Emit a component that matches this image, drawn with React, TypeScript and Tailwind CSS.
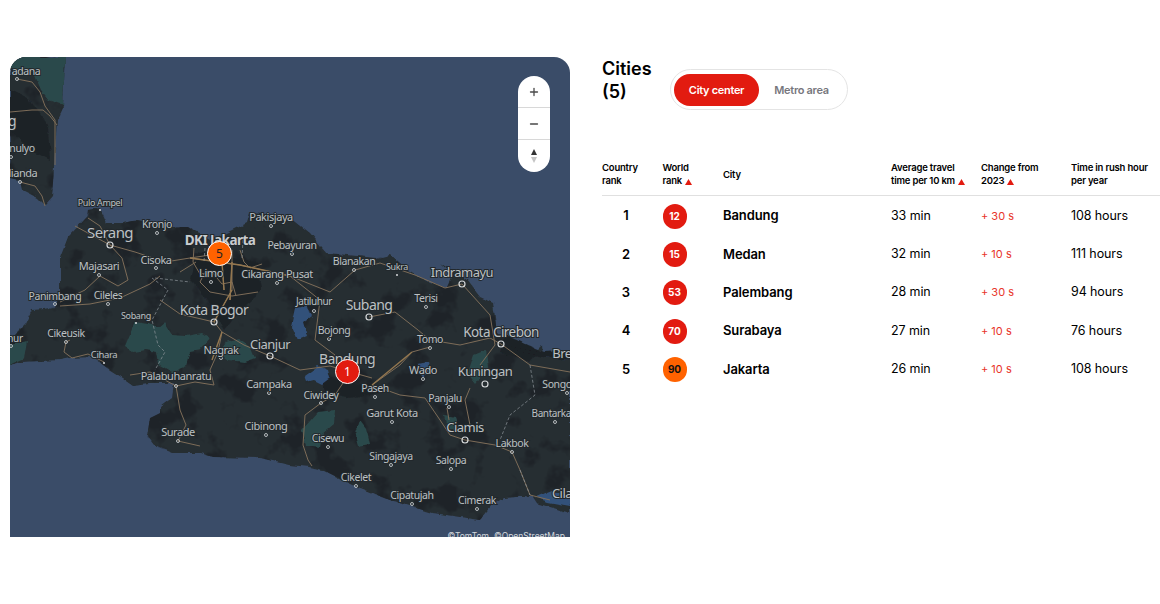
import { Minus, Plus } from 'lucide-react';

const ui = 'font-["Inter","Liberation_Sans",sans-serif]';

// label: text, x, y (baseline centre), font size; dot: 's' small, 'r' big ring
type Place = [string, number, number, number, ('s' | 'r' | 'p')?, number?, number?];

const places: Place[] = [
  ['adana', 26, 75, 10.5, 's', 17, 79],
  ['g', 12, 126, 14],
  ['nulyo', 22, 152, 10.5, 's', 11, 157],
  ['alianda', 20, 177, 11, 's', 20, 182],
  ['Pulo Ampel', 100, 206, 9, 'p', 100, 210],
  ['Kronjo', 157, 228, 10.5, 's', 157, 233],
  ['Pakisjaya', 271, 221, 11, 's', 271, 226],
  ['Serang', 110, 238, 15, 'r', 110, 245],
  ['Pebayuran', 292, 249, 10.5, 's', 292, 254],
  ['Cisoka', 156, 264, 11, 's', 156, 268],
  ['Majasari', 99, 270, 11, 's', 99, 275],
  ['Blanakan', 354, 265, 10.5, 's', 354, 270],
  ['Sukra', 397, 270, 9, 'p', 397, 275],
  ['Limo', 211, 277, 11, 's', 211, 282],
  ['Cikarang Pusat', 277, 278, 11, 's', 277, 283],
  ['Indramayu', 462, 277, 13, 'r', 462, 284],
  ['Panimbang', 55, 300, 10.5, 's', 55, 304],
  ['Cileles', 108, 299, 10.5, 's', 108, 304],
  ['Terisi', 426, 302, 10.5, 's', 426, 307],
  ['Jatiluhur', 314, 305, 10, 's', 314, 311],
  ['Subang', 369, 310, 14, 'r', 369, 317],
  ['Sobang', 136, 319, 9, 'p', 136, 323],
  ['Kota Bogor', 214, 315, 14, 'r', 214, 322],
  ['Bojong', 334, 334, 10.5, 's', 329, 339],
  ['Cikeusik', 66, 337, 10.5, 's', 66, 342],
  ['nur', 15, 342, 10, 's', 11, 346],
  ['Kota Cirebon', 501, 337, 13.5, 'r', 501, 344],
  ['Tomo', 430, 343, 10.5, 's', 430, 348],
  ['Nagrak', 221, 354, 11, 's', 221, 358],
  ['Cianjur', 270, 349, 13, 'r', 270, 356],
  ['Cihara', 104, 358, 9.5, 'p', 104, 363],
  ['Bre', 562, 358, 13],
  ['Bandung', 347, 364, 14],
  ['Wado', 423, 374, 11, 's', 423, 379],
  ['Kuningan', 485, 376, 13, 'r', 485, 384],
  ['Palabuhanratu', 176, 380, 11, 's', 176, 386],
  ['Songo', 557, 388, 10.5, 's', 567, 393],
  ['Campaka', 269, 388, 11, 's', 269, 393],
  ['Paseh', 375, 392, 10.5, 's', 375, 397],
  ['Ciwidey', 321, 399, 10.5, 's', 321, 403],
  ['Panjalu', 445, 402, 10.5, 's', 449, 407],
  ['Garut Kota', 392, 417, 11, 's', 392, 422],
  ['Bantarkaw', 555, 417, 10, 's', 555, 422],
  ['Ciamis', 465, 432, 13, 'r', 465, 440],
  ['Cibinong', 266, 430, 11, 's', 266, 435],
  ['Surade', 178, 436, 11, 's', 178, 441],
  ['Cisewu', 328, 442, 10.5, 's', 328, 447],
  ['Lakbok', 512, 447, 10.5, 's', 512, 452],
  ['Singajaya', 391, 460, 10.5, 's', 391, 465],
  ['Salopa', 451, 464, 10.5, 's', 451, 469],
  ['Cikelet', 356, 481, 10.5, 's', 356, 486],
  ['Cipatujah', 412, 499, 10.5, 's', 412, 504],
  ['Cimerak', 477, 504, 10.5, 's', 477, 509],
  ['Cila', 562, 498, 13],
];

const sumatra = 'M10 57L65 57L63 107L57 120L55 150L53 183L52 197L45 205L38 198L22 190L20 180L10 178Z';
const java =
  'M60 258L68 237L87 217L88 210L100 208L107 223L123 223L137 220L173 227L188 227L213 240L247 223L250 213L290 217L310 233L327 253L377 258L390 255L407 270L430 283L447 288L453 275L440 263L467 280L480 297L493 303L497 333L517 350L537 350L542 345L543 357L570 360L570 513L537 503L533 497L517 497L503 498L490 507L480 520L433 513L390 500L357 487L323 470L310 467L290 465L260 458L213 457L200 453L173 453L153 445L147 437L150 418L160 413L160 407L173 397L175 383L150 383L133 385L123 378L107 368L93 357L70 358L60 360L20 362L10 365L10 340L25 325L32 310L45 309L55 307L60 295Z';

const parks = [
  'M10 57L65 57L63 105L48 100L40 90L33 73L18 72L10 68Z',
  'M10 345L27 341L24 358L10 364Z',
  'M135 322L148 324L158 327L164 322L172 335L186 336L202 333L210 338L200 350L190 352L186 366L172 372L158 364L156 352L146 350L134 352L125 346Z',
  'M226 342L238 338L250 346L255 358L244 362L228 360L220 354Z',
  'M318 412L335 410L334 424L322 434L320 448L305 446L302 430Z',
  'M360 420L366 428L370 444L358 446L355 436Z',
  'M474 355L486 350L488 368L476 384L468 374Z',
  'M444 416L456 418L460 430L448 430Z',
];

const darks = [
  'M196 252L258 262L262 290L240 310L225 330L205 296L190 280Z',
  'M320 372L345 384L372 384L380 392L350 398L325 392Z',
  'M505 335L540 350L530 362L500 352Z',
  'M10 90L30 100L48 125L50 160L30 150L10 130Z',
];

const lakes = [
  'M296 308L306 306L312 316L304 322L308 336L298 340L292 326Z',
  'M304 376L318 366L328 370L330 378L322 384L314 380L306 382Z',
  'M418 364L428 362L430 370L424 378L418 372Z',
];

const roads = [
  'M10 112L32 110L43 110L50 116L57 125',
  'M17 79L32 82L40 92L45 106L55 120L55 165',
  'M20 182L35 186L42 196L45 206',
  'M88 218L100 226L110 245L135 252L165 262L190 258L210 255',
  'M110 245L75 226M110 245L122 258L128 280L118 286L100 276L85 290L60 302',
  'M60 306L90 304L120 298L150 284L160 276',
  'M70 340L66 342L64 352L72 358L88 354L104 362',
  'M160 300L180 314L214 322L222 332L218 352L210 370L214 385L195 382L176 386L180 410L186 425L178 441L200 446',
  'M130 375L150 372L176 386',
  'M222 332L244 345L270 356L300 370L330 366L347 371L372 378',
  'M214 322L232 290L232 250',
  'M190 258L240 265L290 276L330 292L355 270L380 263L415 275L445 288L462 284',
  'M290 276L320 300L315 340L335 355L345 380L335 395L321 403L305 415L303 445L308 460L312 466',
  'M369 317L395 312L418 330L430 340L460 345L490 338L501 344L530 365L570 372',
  'M372 385L400 365L412 352L430 347',
  'M372 385L400 395L425 398L440 420L450 435L465 440L495 445L512 452',
  'M462 284L490 315L495 345L480 365',
  'M470 388L465 400L470 425',
  'M447 408L449 420',
  'M512 452L520 470L530 495L550 500',
  // Jakarta web
  'M194 248L193 262L200 274L212 272L222 284L232 282L236 296',
  'M240 250L244 262L250 268L262 264',
  'M204 274L200 282L210 292L232 296L258 292',
  'M180 272L196 262M222 262L224 290M232 262L230 300',
];

const dashed = [
  'M152 278L168 290L152 320L158 345L165 352L155 370',
  'M530 365L535 395L510 415L500 440',
  'M155 278L190 282',
  'M205 248L204 262M243 240L242 258',
  'M520 470L530 495',
];

const labelFont = 'font-["Noto_Sans",sans-serif] [paint-order:stroke] tracking-[-0.04em]';

function MapCanvas() {
  return (
    <svg viewBox="10 57 560 480" className="block h-full w-full">
      <defs>
        <filter id="rough" x="-5%" y="-5%" width="110%" height="110%">
          <feTurbulence type="fractalNoise" baseFrequency="0.09" numOctaves="3" seed="4" />
          <feDisplacementMap in="SourceGraphic" scale="5" xChannelSelector="R" yChannelSelector="G" />
        </filter>
        <filter id="mottle" x="0" y="0" width="100%" height="100%" colorInterpolationFilters="sRGB">
          <feTurbulence type="fractalNoise" baseFrequency="0.035" numOctaves="4" seed="11" />
          <feColorMatrix type="matrix" values="0 0 0 0 0.118  0 0 0 0 0.137  0 0 0 0 0.157  0 0 0 7 -3.7" />
        </filter>
        <clipPath id="land">
          <path d={sumatra} />
          <path d={java} />
        </clipPath>
      </defs>
      <rect x="10" y="57" width="560" height="480" fill="#3a4c68" />
      <g filter="url(#rough)">
        <path d={sumatra} fill="#262d30" />
        <path d={java} fill="#262d30" />
      </g>
      <g clipPath="url(#land)">
        <rect x="10" y="57" width="560" height="480" filter="url(#mottle)" />
      </g>
      <g filter="url(#rough)">
        {darks.map((d) => (
          <path key={d} d={d} fill="#1d2227" />
        ))}
        {parks.map((d) => (
          <path key={d} d={d} fill="#2b4a4b" />
        ))}
        {lakes.map((d) => (
          <path key={d} d={d} fill="#33517a" />
        ))}
        <path d="M510 345L545 352L570 350L570 360L543 357L520 352Z" fill="#1c2025" />
        <path d="M535 497L552 490L570 500L570 506L548 502Z" fill="#33517a" />
      </g>
      {roads.map((d) => (
        <path key={d} d={d} fill="none" stroke="#7d6c58" strokeWidth="1" strokeLinejoin="round" />
      ))}
      <path d="M190 258L240 265L290 276M214 322L232 290M222 332L212 360M372 385L412 352M222 262L224 290M232 262L230 300" fill="none" stroke="#94774f" strokeWidth="1.4" />
      {dashed.map((d) => (
        <path key={d} d={d} fill="none" stroke="#8e959b" strokeWidth="0.7" strokeDasharray="3 2" />
      ))}
      {places.map(([name, x, y, size, dot, dx, dy]) => (
        <g key={name}>
          {dot === 'r' && <circle cx={dx} cy={dy} r="3" fill="none" stroke="#d4d7d9" strokeWidth="1.2" />}
          {dot === 's' && <circle cx={dx} cy={dy} r="1.5" fill="none" stroke="#c4c8cb" strokeWidth="0.9" />}
          {dot === 'p' && <circle cx={dx} cy={dy} r="1" fill="#d8dadc" />}
          <text
            x={x}
            y={y}
            textAnchor="middle"
            fontSize={size}
            fill="#bcc0c3"
            stroke="#22282c"
            strokeWidth="2"
            className={labelFont}
          >
            {name}
          </text>
        </g>
      ))}
      <text x="220" y="245" textAnchor="middle" fontSize="13.5" fontWeight="700" fill="#c9cccf" stroke="#22282c" strokeWidth="2" className={labelFont}>
        DKI Jakarta
      </text>
    </svg>
  );
}

function ZoomControls() {
  return (
    <div className="absolute right-[20px] top-[19px] flex w-[32px] flex-col overflow-hidden rounded-full bg-white text-[#4a4a4a]">
      <div className="flex h-[32px] items-center justify-center border-b border-[#d8d8d8]">
        <Plus size={12} strokeWidth={2.6} />
      </div>
      <div className="flex h-[32px] items-center justify-center border-b border-[#d8d8d8]">
        <Minus size={12} strokeWidth={2.6} />
      </div>
      <div className="flex h-[32px] items-center justify-center">
        <svg width="8" height="16" viewBox="0 0 8 16">
          <path d="M4 1L7 7H1Z" fill="#333" />
          <path d="M4 15L1 9H7Z" fill="#c4c4c4" />
        </svg>
      </div>
    </div>
  );
}

function Marker({ label, pos, color }: { label: string; pos: string; color: string }) {
  return (
    <div
      className={`absolute flex h-[25px] w-[25px] items-center justify-center rounded-full border border-white font-["Noto_Sans",sans-serif] text-[12px] ${pos} ${color}`}
    >
      {label}
    </div>
  );
}

function UpTriangle() {
  return (
    <svg width="7" height="6" viewBox="0 0 7 6" className="ml-[3px] inline-block align-[-0.5px]">
      <path d="M3.5 0L7 6H0Z" fill="#e21b10" />
    </svg>
  );
}

const rows = [
  { rank: 1, world: 12, city: 'Bandung', time: '33 min', change: '+ 30 s', rush: '108 hours' },
  { rank: 2, world: 15, city: 'Medan', time: '32 min', change: '+ 10 s', rush: '111 hours' },
  { rank: 3, world: 53, city: 'Palembang', time: '28 min', change: '+ 30 s', rush: '94 hours' },
  { rank: 4, world: 70, city: 'Surabaya', time: '27 min', change: '+ 10 s', rush: '76 hours' },
  { rank: 5, world: 90, city: 'Jakarta', time: '26 min', change: '+ 10 s', rush: '108 hours' },
];

const columns = 'grid grid-cols-[60.5px_60.5px_168px_90px_90px_1fr] items-center';

export default function App() {
  return (
    <div className={`flex h-[604px] w-[1160px] overflow-hidden bg-white pl-[10px] pt-[57px] text-black ${ui}`}>
      <div className="relative h-[480px] w-[560px] shrink-0 overflow-hidden rounded-t-[16px]">
        <MapCanvas />
        <ZoomControls />
        <Marker label="5" pos="left-[197px] top-[184px]" color="bg-[#ff6200] text-[#222]" />
        <Marker label="1" pos="left-[325px] top-[302px]" color="bg-[#e21b10] text-white" />
        <div className="absolute bottom-[-6px] right-[5px] text-[8.5px] text-[#d5d8dc]">©TomTom, ©OpenStreetMap</div>
      </div>

      <div className="ml-[32px] flex-1">
        <div className="flex items-start">
          <h2 className="w-[68px] text-[18px] font-semibold leading-[23px]">Cities (5)</h2>
          <div className="mt-[12px] flex h-[41px] w-[178px] items-center rounded-full border border-[#e4e4e4] px-[3px] pt-[1px] text-[11px] font-semibold tracking-[-0.3px]">
            <div className="flex h-[32px] w-[85px] items-center justify-center rounded-full bg-[#e21b10] text-white">City center</div>
            <div className="flex-1 text-center text-[#77777d]">Metro area</div>
          </div>
        </div>

        <div className={`${columns} mb-[1px] mt-[51px] border-b border-[#e0e0e0] pb-[8px] text-[9.5px] font-semibold leading-[13px] tracking-[-0.2px]`}>
          <div>Country<br />rank</div>
          <div>World<br />rank<UpTriangle /></div>
          <div>City</div>
          <div>Average travel<br />time per 10 km<UpTriangle /></div>
          <div>Change from<br />2023<UpTriangle /></div>
          <div>Time in rush hour<br />per year</div>
        </div>

        {rows.map((r) => (
          <div key={r.rank} className={`${columns} h-[38.3px]`}>
            <div className="w-[48px] text-center text-[13px] font-semibold">{r.rank}</div>
            <div
              className={`flex h-[25px] w-[24px] items-center justify-center rounded-full text-[10px] font-bold ${
                r.world === 90 ? 'bg-[#ff6200] text-[#111]' : 'bg-[#e21b10] text-white'
              }`}
            >
              {r.world}
            </div>
            <div className="text-[13px] font-semibold tracking-[-0.1px]">{r.city}</div>
            <div className="text-[12.5px] tracking-[-0.1px]">{r.time}</div>
            <div className="text-[11px] text-[#e8352b]">{r.change}</div>
            <div className="text-[12.5px] tracking-[-0.1px]">{r.rush}</div>
          </div>
        ))}
      </div>
    </div>
  );
}
